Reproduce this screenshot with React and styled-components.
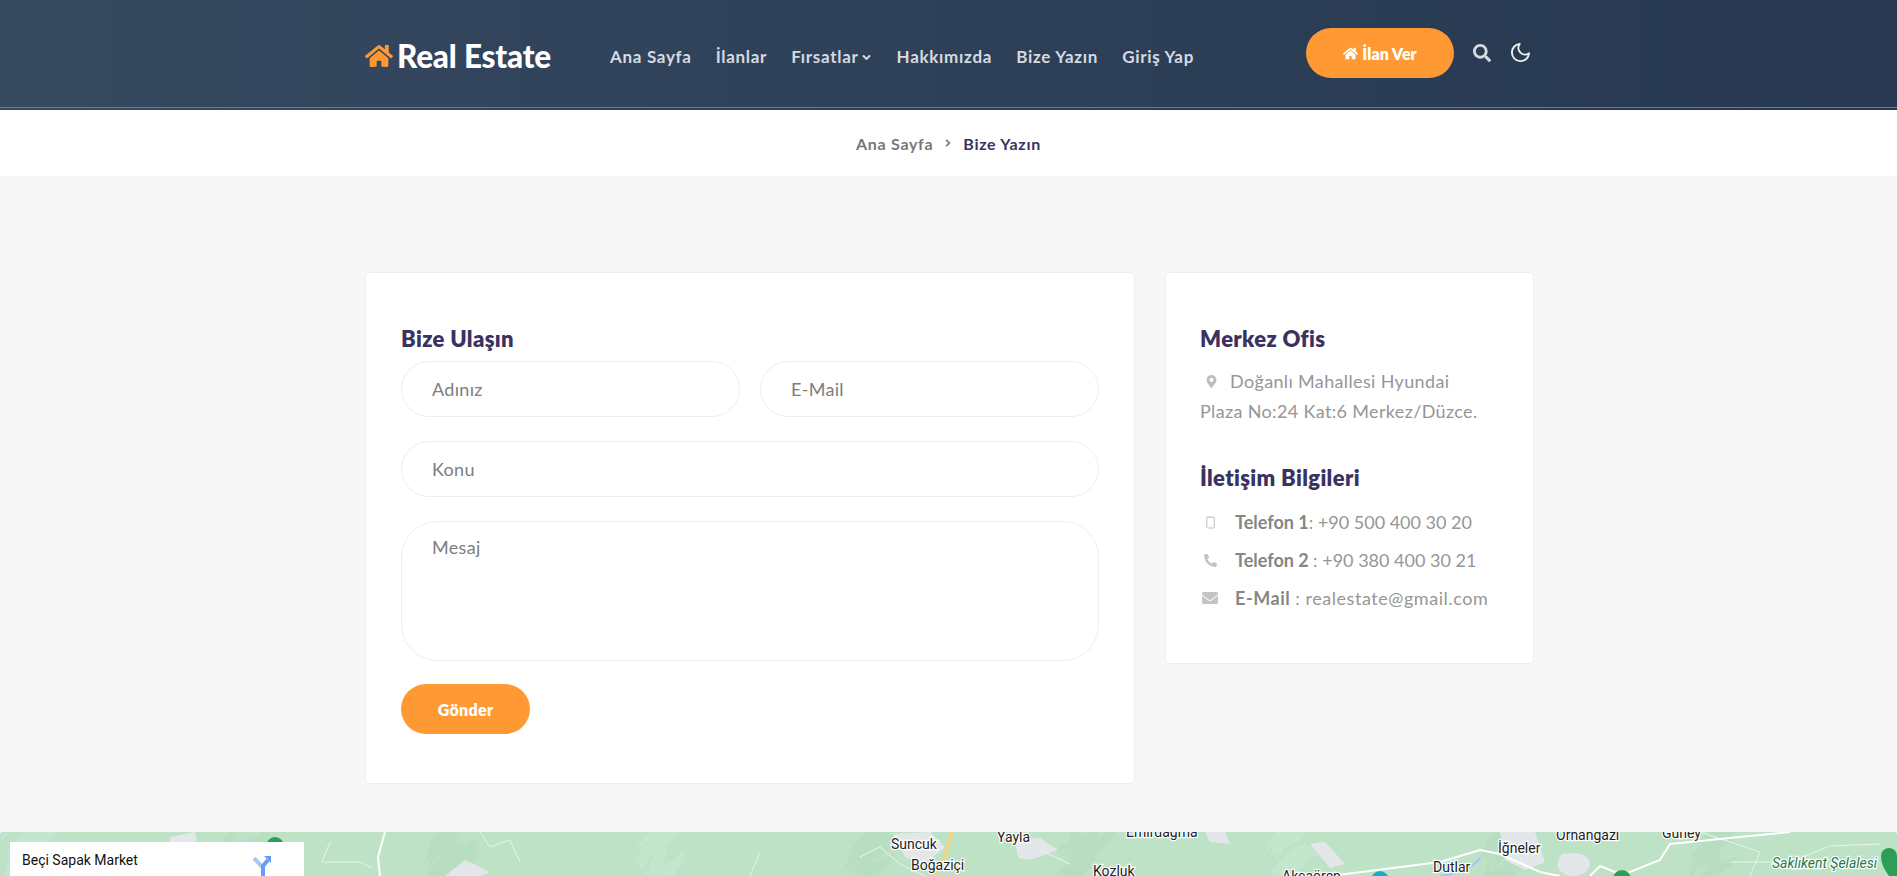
import React from "react";
import styled, { createGlobalStyle } from "styled-components";
import { FaHome, FaSearch, FaMapMarkerAlt, FaPhoneAlt, FaEnvelope, FaAngleDown, FaAngleRight } from "react-icons/fa";
import { FiMoon, FiSmartphone } from "react-icons/fi";

const GlobalStyle = createGlobalStyle`
  html, body {
    margin: 0;
    padding: 0;
    background: #f7f7f7;
    font-family: "Lato", "Noto Sans", sans-serif;
    overflow: hidden;
  }
  * { box-sizing: border-box; }
`;

const Header = styled.header`
  height: 110px;
  background: linear-gradient(90deg, #36495f 0%, #2f425a 40%, #273850 100%);
  position: relative;
  &::after {
    content: "";
    display: block;
    position: absolute;
    left: 0;
    right: 0;
    bottom: 2px;
    height: 1px;
    background: #6a7a8e;
  }
`;

const HeaderInner = styled.div`
  width: 1170px;
  margin-left: 365px;
  height: 107px;
  display: flex;
  align-items: flex-start;
`;

const Logo = styled.a`
  display: flex;
  align-items: center;
  gap: 4px;
  margin-top: 38px;
  width: 245px;
  color: #fff;
  font-size: 31.5px;
  font-weight: 900;
  line-height: 36px;
  letter-spacing: -0.2px;
  svg { color: #ff9933; font-size: 28px; }
`;

const Nav = styled.nav`
  display: flex;
  gap: 24px;
  margin-top: 47px;
  width: 696px;
`;

const NavLink = styled.a`
  display: flex;
  align-items: center;
  gap: 1px;
  color: #d6dae0;
  font-size: 17px;
  font-weight: 700;
  line-height: 20px;
  letter-spacing: 0.7px;
  svg { font-size: 13px; }
`;

const PostButton = styled.a`
  display: flex;
  align-items: center;
  justify-content: center;
  gap: 4px;
  width: 148px;
  height: 50px;
  margin-top: 28px;
  border-radius: 25px;
  background: #ff9933;
  color: #fff;
  font-size: 16px;
  font-weight: 800;
  svg { font-size: 15px; }
`;

const IconButton = styled.span`
  display: flex;
  color: ${(p) => p.$color};
  font-size: ${(p) => p.$size}px;
  margin-top: ${(p) => p.$top}px;
  margin-left: ${(p) => p.$left}px;
`;

const Breadcrumb = styled.div`
  height: 66px;
  background: #fff;
  display: flex;
  align-items: center;
  justify-content: center;
  gap: 9px;
  font-size: 16px;
  font-weight: 700;
  letter-spacing: 0.7px;
  color: #777;
  svg { font-size: 12px; color: #888; }
`;

const Current = styled.span`
  color: #3a3260;
`;

const Content = styled.main`
  width: 1169px;
  margin-left: 365px;
  padding-top: 96px;
  display: flex;
  align-items: flex-start;
  gap: 30px;
`;

const Card = styled.section`
  background: #fff;
  border: 1px solid #eeeeee;
  border-radius: 5px;
  width: ${(p) => p.$width}px;
  height: ${(p) => p.$height}px;
  padding: 53px 29px 0 ${(p) => p.$left}px;
`;

const Title = styled.h3`
  margin: ${(p) => p.$margin || "0"};
  color: #3a3260;
  font-size: 22px;
  font-weight: 800;
  line-height: 26px;
  letter-spacing: 0.35px;
`;

const FormGrid = styled.form`
  display: grid;
  grid-template-columns: 339px 339px;
  column-gap: 20px;
  row-gap: 24px;
  margin-top: 9px;
`;

const Field = styled.input`
  width: 100%;
  height: 56px;
  padding: 0 30px;
  border: 1px solid #eeeeee;
  border-radius: 28px;
  background: #fff;
  font-family: inherit;
  font-size: 18px;
  letter-spacing: 0.3px;
  grid-column: ${(p) => (p.$wide ? "1 / 3" : "auto")};
  &::placeholder { color: #7d7d7d; opacity: 1; }
`;

const MessageField = styled.textarea`
  grid-column: 1 / 3;
  height: 140px;
  padding: 14px 30px;
  border: 1px solid #eeeeee;
  border-radius: 36px;
  background: #fff;
  font-family: inherit;
  font-size: 18px;
  letter-spacing: 0.3px;
  resize: none;
  &::placeholder { color: #7d7d7d; opacity: 1; }
`;

const SendButton = styled.button`
  width: 129px;
  height: 50px;
  margin-top: 23px;
  border: 0;
  border-radius: 25px;
  background: #ff9933;
  color: #fff;
  font-family: inherit;
  font-size: 16px;
  font-weight: 800;
  letter-spacing: 0.3px;
`;

const Address = styled.p`
  margin: 15px 0 0;
  color: #969696;
  font-size: 18px;
  line-height: 28px;
  letter-spacing: 0.35px;
  white-space: nowrap;
`;

const PinIcon = styled.span`
  display: inline-block;
  width: 30px;
  padding-left: 5px;
  color: #bdbdbd;
  font-size: 13px;
`;

const ContactList = styled.ul`
  list-style: none;
  margin: 17px 0 0;
  padding: 0;
  display: flex;
  flex-direction: column;
  gap: 10px;
`;

const ContactRow = styled.li`
  display: flex;
  align-items: center;
  height: 28px;
  color: #969696;
  font-size: 18px;
  letter-spacing: ${(p) => p.$spacing}px;
  white-space: pre;
  strong { color: #868686; font-weight: 700; }
`;

const ContactIcon = styled.span`
  display: flex;
  justify-content: center;
  width: 20px;
  margin-right: 15px;
  color: #c4c4c4;
  font-size: ${(p) => p.$size}px;
`;

const MapStrip = styled.div`
  position: relative;
  height: 44px;
  margin-top: 48px;
  overflow: hidden;
  background: #bde2c6;
  border-radius: 3px 3px 0 0;
  svg { display: block; }
`;

const MapCard = styled.div`
  position: absolute;
  left: 10px;
  top: 10px;
  width: 294px;
  height: 60px;
  background: #fff;
  padding: 10px 12px;
  font-family: "Roboto", sans-serif;
  font-size: 14px;
  line-height: 17px;
  color: #111;
`;

const DirectionIcon = styled.svg`
  position: absolute;
  left: 243px;
  top: 13px;
`;

const labelStyle = {
  fontFamily: "Roboto, sans-serif",
  fontSize: 14,
  fill: "#222",
  stroke: "#fff",
  strokeWidth: 2.4,
  paintOrder: "stroke",
};

const mapLabels = [
  ["Suncuk", 891, 17],
  ["Boğaziçi", 911, 38],
  ["Yayla", 997, 10],
  ["Emirdağma", 1126, 5],
  ["Kozluk", 1093, 44],
  ["Akçaören", 1282, 49],
  ["Dutlar", 1433, 40],
  ["İğneler", 1498, 21],
  ["Orhangazi", 1556, 8],
  ["Güney", 1662, 6],
];

// terrain shading: short slanted streaks spread along the strip
const streaks = Array.from({ length: 90 }, (_, i) => {
  const x = (i * 211) % 1897;
  const y = (i * 37) % 44;
  const w = 14 + (i * 13) % 34;
  const h = 8 + (i * 7) % 16;
  return {
    d: `M${x} ${y + h}Q${x + w * 0.3} ${y - h * 0.3} ${x + w} ${y - h}Q${x + w * 0.8} ${y + h * 0.4} ${x} ${y + h}Z`,
    fill: i % 3 === 0 ? "#c3e6cc" : "#b8dec2",
  };
});

const greyAreas = [
  "M893 2L930 0L945 15L925 32L905 25Z",
  "M1015 8L1040 6L1058 18L1030 28L1018 26Z",
  "M1500 0H1535L1545 30L1525 38L1505 28Z",
  "M1562 22Q1585 18 1590 30Q1590 44 1570 44Q1550 38 1562 22Z",
  "M1310 12L1325 10L1345 32L1330 36Z",
  "M170 5L195 0L200 25L170 20Z",
  "M445 44L465 28L490 40L480 44Z",
  "M1205 0H1225L1230 12L1210 10Z",
];

const whiteLines = [
  "M385 0L378 25L380 44",
  "M1330 44L1440 30L1480 18L1500 22L1540 40L1560 44",
  "M1620 44L1660 28L1670 12L1710 8L1790 0",
  "M1590 44L1600 34L1625 44",
];

const thinLines = [
  "M330 10L322 30L360 30L372 36",
  "M480 0L490 15L510 8L520 30",
  "M760 20L750 44",
  "M1040 18L1070 32",
  "M1730 30L1790 30L1830 14L1880 12",
  "M1700 0L1760 20L1750 44",
  "M860 25L880 15L900 32L925 44",
];

const App = () => {
  return (
    <>
      <GlobalStyle />
      <Header>
        <HeaderInner>
          <Logo>
            <FaHome />
            Real Estate
          </Logo>
          <Nav>
            <NavLink>Ana Sayfa</NavLink>
            <NavLink>İlanlar</NavLink>
            <NavLink>
              Fırsatlar <FaAngleDown />
            </NavLink>
            <NavLink>Hakkımızda</NavLink>
            <NavLink>Bize Yazın</NavLink>
            <NavLink>Giriş Yap</NavLink>
          </Nav>
          <PostButton>
            <FaHome />
            İlan Ver
          </PostButton>
          <IconButton $color="#d6dae0" $size={18} $top={44} $left={19}>
            <FaSearch />
          </IconButton>
          <IconButton $color="#eef0f3" $size={23} $top={41} $left={18}>
            <FiMoon />
          </IconButton>
        </HeaderInner>
      </Header>
      <Breadcrumb>
        Ana Sayfa
        <FaAngleRight />
        <Current>Bize Yazın</Current>
      </Breadcrumb>
      <Content>
        <Card $width={770} $height={512} $left={35}>
          <Title>Bize Ulaşın</Title>
          <FormGrid>
            <Field placeholder="Adınız" />
            <Field placeholder="E-Mail" />
            <Field $wide placeholder="Konu" />
            <MessageField placeholder="Mesaj" />
          </FormGrid>
          <SendButton>Gönder</SendButton>
        </Card>
        <Card $width={369} $height={392} $left={34}>
          <Title>Merkez Ofis</Title>
          <Address>
            <PinIcon>
              <FaMapMarkerAlt />
            </PinIcon>
            Doğanlı Mahallesi Hyundai
            <br />
            Plaza No:24 Kat:6 Merkez/Düzce.
          </Address>
          <Title $margin="40px 0 0">İletişim Bilgileri</Title>
          <ContactList>
            <ContactRow $spacing={0}>
              <ContactIcon $size={13}>
                <FiSmartphone />
              </ContactIcon>
              <strong>Telefon 1</strong>: +90 500 400 30 20
            </ContactRow>
            <ContactRow $spacing={0}>
              <ContactIcon $size={13}>
                <FaPhoneAlt />
              </ContactIcon>
              <strong>Telefon 2 </strong>: +90 380 400 30 21
            </ContactRow>
            <ContactRow $spacing={0.55}>
              <ContactIcon $size={16}>
                <FaEnvelope />
              </ContactIcon>
              <strong>E-Mail </strong>: realestate@gmail.com
            </ContactRow>
          </ContactList>
        </Card>
      </Content>
      <MapStrip>
        <svg width="1897" height="44" viewBox="0 0 1897 44">
          {streaks.map((s) => (
            <path key={s.d} d={s.d} fill={s.fill} />
          ))}
          {greyAreas.map((d) => (
            <path key={d} d={d} fill="#e4e7ea" />
          ))}
          {thinLines.map((d) => (
            <path key={d} d={d} fill="none" stroke="#e8f4ec" strokeWidth="1" />
          ))}
          {whiteLines.map((d) => (
            <path key={d} d={d} fill="none" stroke="#fff" strokeWidth="2" />
          ))}
          <path d="M952 0L946 22L934 44" fill="none" stroke="#fbd277" strokeWidth="3" />
          <path d="M1480 26Q1470 40 1440 44" fill="none" stroke="#9cc8ee" strokeWidth="2" />
          <circle cx="275" cy="14" r="9" fill="#2e9e57" />
          <circle cx="1380" cy="48" r="9" fill="#1ea9c4" />
          <circle cx="1622" cy="47" r="9" fill="#2e9e57" />
          <path d="M1889 16a8 8 0 0 1 8 8v20h-4l-4 0q-8-10-8-20a8 8 0 0 1 8-8z" fill="#2e9e57" />
          {mapLabels.map(([text, x, y]) => (
            <text key={text} x={x} y={y} style={labelStyle}>
              {text}
            </text>
          ))}
          <text x="1772" y="36" style={{ ...labelStyle, fill: "#237a4a", fontStyle: "italic" }}>
            Saklıkent Şelalesi
          </text>
        </svg>
        <MapCard>
          Beçi Sapak Market
          <DirectionIcon width="18" height="22" viewBox="0 0 18 22">
            <path d="M10 22V13L1 3" fill="none" stroke="#a9c7f3" strokeWidth="4" />
            <path d="M10 22V11L15 5" fill="none" stroke="#669df6" strokeWidth="4" />
            <path d="M11 1H18V8Z" fill="#669df6" />
          </DirectionIcon>
        </MapCard>
      </MapStrip>
    </>
  );
};

export default App;
